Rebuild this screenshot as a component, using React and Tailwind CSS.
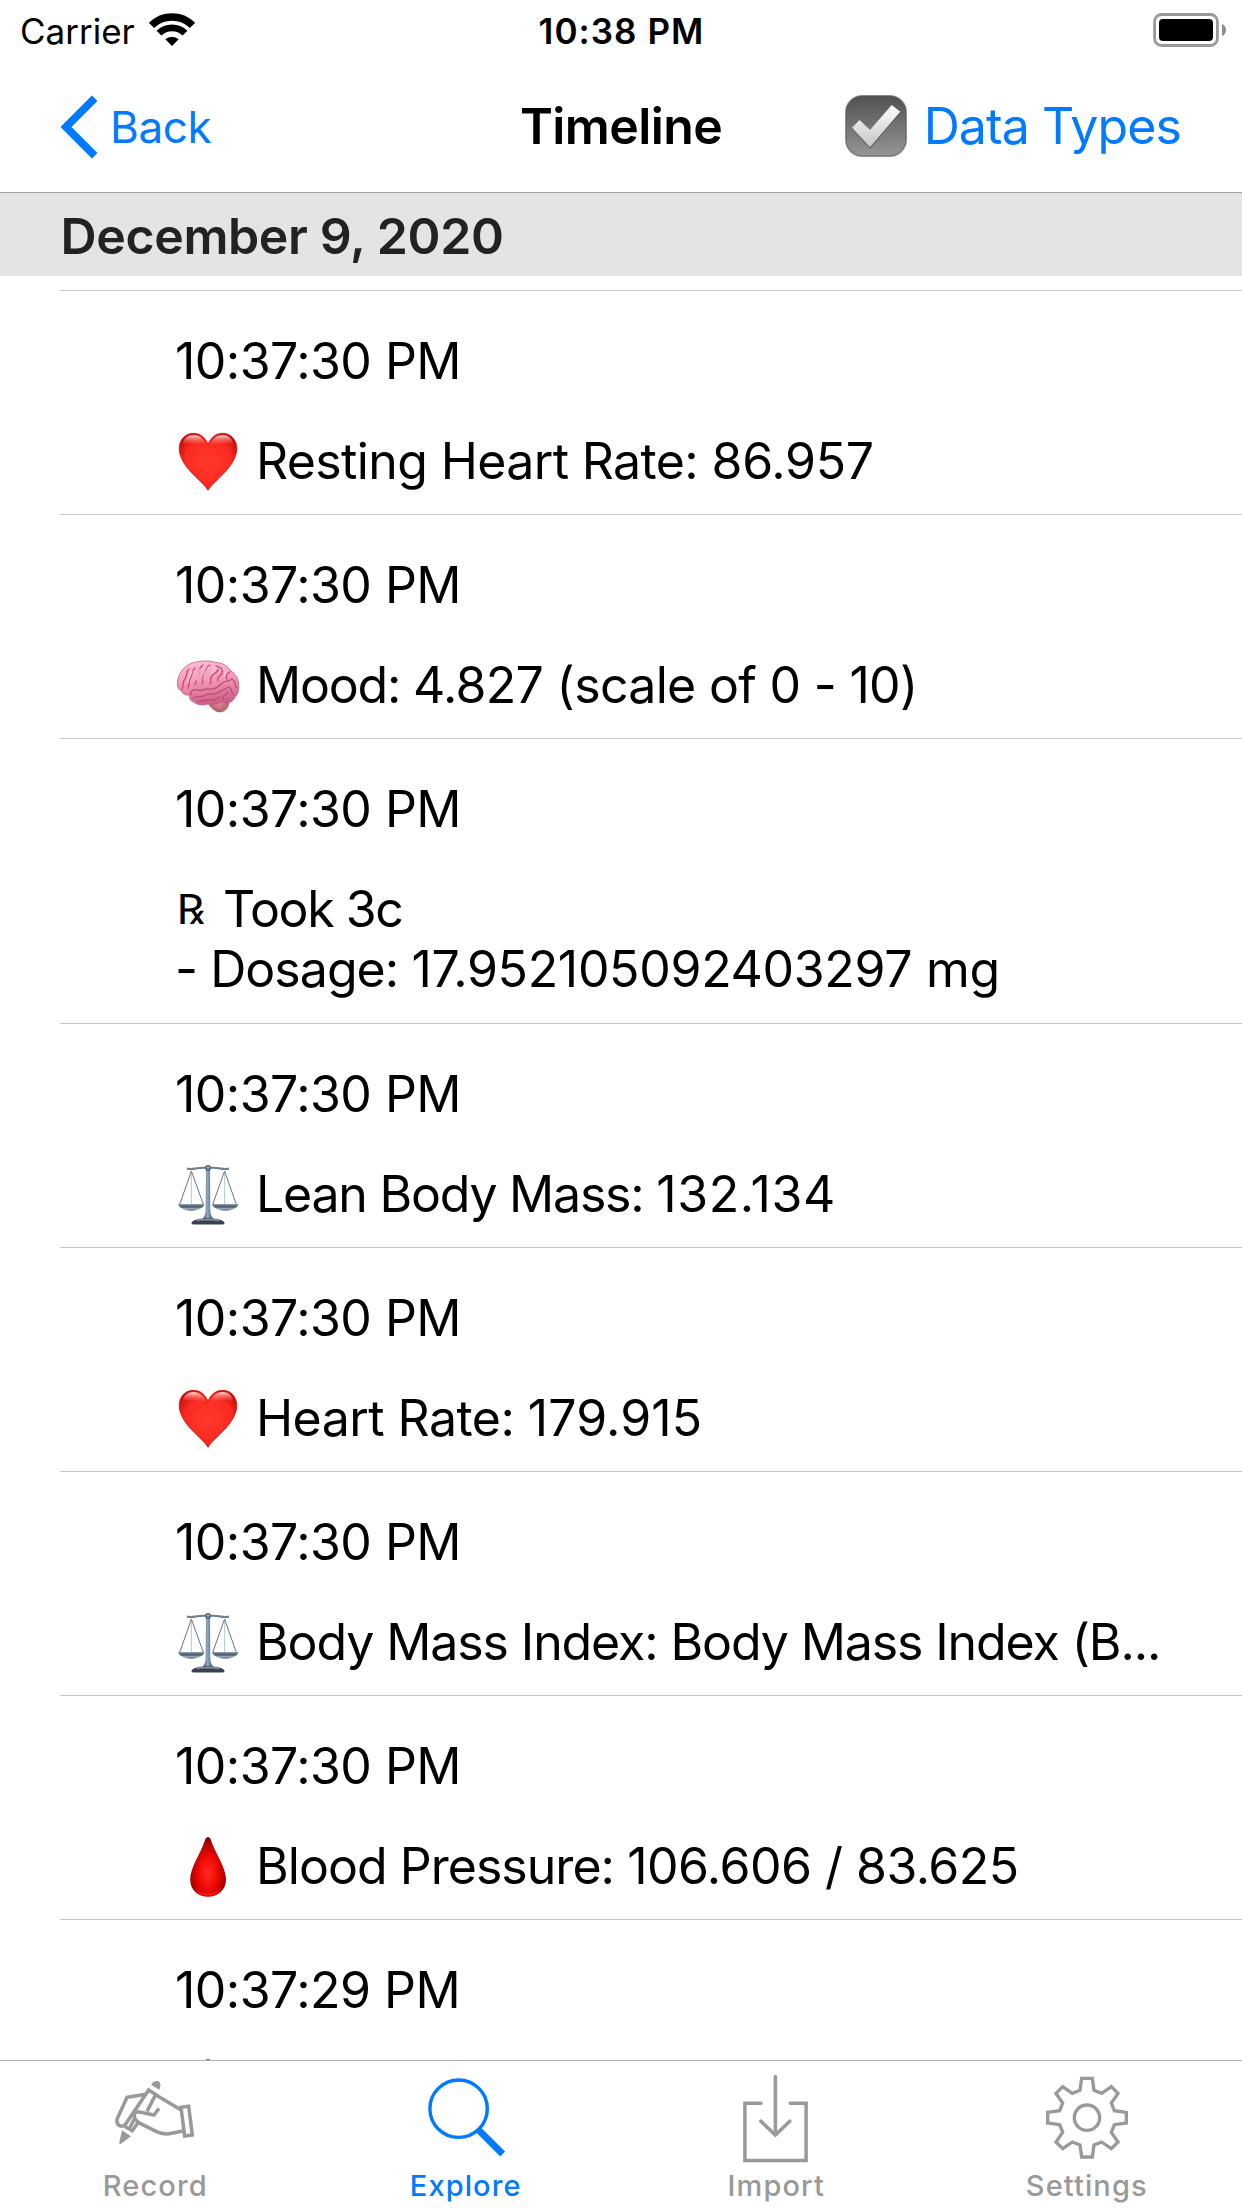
const HeartIcon = () => (
  <svg viewBox="0 0 64 64" className="block size-16 shrink-0">
    <defs>
      <radialGradient id="heartFill" cx="0.5" cy="0.5" r="0.58">
        <stop offset="0" stopColor="#ff3a2c" />
        <stop offset="0.7" stopColor="#fb2a20" />
        <stop offset="1" stopColor="#c80c08" />
      </radialGradient>
      <linearGradient id="heartShine" x1="0" y1="0" x2="0" y2="1">
        <stop offset="0" stopColor="#ffe3e0" stopOpacity="0.95" />
        <stop offset="1" stopColor="#ff6a60" stopOpacity="0" />
      </linearGradient>
    </defs>
    <path d="M32 60.3C27 51 3.4 37 3.2 18.5C3.2 9.500 9.500 3.300 17.500 3.300C24 3.300 29.500 7.500 32 14.500C34.500 7.500 40 3.300 46.500 3.300C54.500 3.300 60.800 9.500 60.800 18.500C60.600 37 37 51 32 60.300Z" fill="url(#heartFill)" stroke="#cf120d" strokeWidth="0.8" />
    <path d="M6.500 15C7.500 8 12 5 17.500 5C23.500 5 28 9 30 15C24 13 12 11.500 6.500 15Z" fill="url(#heartShine)" />
    <path d="M57.500 15C56.500 8 52 5 46.500 5C40.500 5 36 9 34 15C40 13 52 11.500 57.500 15Z" fill="url(#heartShine)" />
  </svg>
);

const BrainIcon = () => (
  <svg viewBox="0 0 64 64" className="block size-16 shrink-0" strokeLinecap="round" strokeLinejoin="round">
    <defs>
      <linearGradient id="brainFill" x1="0.4" y1="0" x2="0.6" y2="1">
        <stop offset="0" stopColor="#ffbdd1" />
        <stop offset="0.45" stopColor="#f596b5" />
        <stop offset="1" stopColor="#c95a82" />
      </linearGradient>
      <radialGradient id="brainStem" cx="0.55" cy="0.5" r="0.6">
        <stop offset="0" stopColor="#dd8a92" />
        <stop offset="1" stopColor="#a84f60" />
      </radialGradient>
    </defs>
    <path d="M31 48C35 55 40 58.500 44 58.300C50 58 53.500 53 53.500 46L40 42Z" fill="url(#brainStem)" />
    <path d="M1.500 31C1 22 6 14 13 10.500C21 6.500 33 6 40 8.500C46 8.500 52 12 55 17C60 20 63 26 62.800 32C63 37 61.500 41 59 43C57.500 47.500 52 50.500 47 47.500C43 50 36 50 33 49.500C28 52 21 51 18 48C14 47 13 44 14 41C9 42 6 39 6 37C3 36 1.600 34 1.500 31Z" fill="url(#brainFill)" stroke="#c45c80" strokeWidth="0.8" />
    <g fill="none" stroke="#b94c74" strokeWidth="1.250">
      <path d="M15 41C14 37 18 35 21 36C26 38 29 34 33 35C38 36 42 33 45 30C48 27 52 28 56 25" />
      <path d="M17 44C22 41 26 44 29 41C33 39 38 42 43 38C46 35 50 36 52 33" />
      <path d="M6 36C8 32 6 28 9 25C12 21 9 18 13 15" />
      <path d="M12 34C14 30 12 26 15 23C17 20 15 17 19 14" />
      <path d="M19 31C21 27 19 25 22 21C24 18 22 14 27 11" />
      <path d="M26 30C28 26 25 24 29 20C31 17 29 13 34 11" />
      <path d="M34 30C36 27 33 25 36 22C38 18 42 20 42 15" />
      <path d="M42 27C40 23 45 22 46 19C48 15 44 13 40 12" />
      <path d="M51 25C49 21 52 19 54 18M56 25C60 27 58 32 61 34M53 33C57 35 54 39 58 41M47 46C45 42 50 41 52 38" />
      <path d="M22 47C27 48 30 45 34 46C38 46 41 45 43 43" />
    </g>
    <g fill="none" stroke="#ffd7e3" strokeWidth="1.200" opacity="0.8">
      <path d="M16 17C15 21 12 24 12 28M24 15C23 20 20 23 20 26M32 14C31 18 28 21 28 25M38 13C40 15 37 18 36 19M47 15C51 17 49 20 48 23" />
    </g>
  </svg>
);

const ScalesIcon = () => (
  <svg viewBox="0 0 64 64" className="block size-16 shrink-0" fill="none">
    <defs>
      <linearGradient id="metal" x1="0" y1="0" x2="1" y2="0">
        <stop offset="0" stopColor="#4b586b" />
        <stop offset="0.45" stopColor="#8ba6c0" />
        <stop offset="1" stopColor="#4b5566" />
      </linearGradient>
      <linearGradient id="pan" x1="0" y1="0" x2="0" y2="1">
        <stop offset="0" stopColor="#8ba3bb" />
        <stop offset="0.45" stopColor="#4a4f57" />
        <stop offset="0.75" stopColor="#9cbbd8" />
        <stop offset="1" stopColor="#3c4552" />
      </linearGradient>
    </defs>
    <path d="M11 5.500C16 7.500 22 3.500 32 5C42 3.500 48 7.500 53 5.500" stroke="#6d7d90" strokeWidth="1.900" />
    <path d="M15.400 8V41M48.600 8V41" stroke="#b4c8de" strokeWidth="1" />
    <path d="M15.400 8L3.500 42M15.400 8L27.500 42M48.600 8L36.500 42M48.600 8L60.500 42" stroke="#70747b" strokeWidth="1" />
    <path d="M30 6H34L34.300 47C34.600 52 36 54 37.500 56H26.500C28 54 29.400 52 29.700 47Z" fill="url(#metal)" />
    <circle cx="32" cy="5" r="3" fill="#57677c" />
    <circle cx="32" cy="4.600" r="1.200" fill="#a9bdd3" />
    <path d="M2 41H28.500C27.500 45 22 47.500 15.300 47.500C8.500 47.500 3 45 2 41Z" fill="url(#pan)" />
    <path d="M36 41H62.500C61.500 45 56 47.500 49.300 47.500C42.500 47.500 37 45 36 41Z" fill="url(#pan)" />
    <path d="M15.500 60.500C15.500 57.500 22 55.300 32 55.300C42 55.300 48.500 57.500 48.500 60.500C48.500 61.200 47 61.500 45 61.500H19C17 61.500 15.500 61.200 15.500 60.500Z" fill="#38404c" />
    <path d="M21 57.600C26 56.300 38 56.300 43 57.600" stroke="#92a9c1" strokeWidth="1.400" />
  </svg>
);

const DropIcon = () => (
  <svg viewBox="0 0 64 64" className="block size-16 shrink-0">
    <defs>
      <radialGradient id="dropFill" gradientUnits="userSpaceOnUse" cx="32" cy="38" r="30" gradientTransform="translate(32 38) scale(0.68 1.2) translate(-32 -38)">
        <stop offset="0" stopColor="#ff2a20" />
        <stop offset="0.45" stopColor="#f00a06" />
        <stop offset="0.8" stopColor="#b50000" />
        <stop offset="1" stopColor="#7c0000" />
      </radialGradient>
    </defs>
    <path d="M32 2C33.500 2 34.500 3.500 35 5C39 18 50 32 50 44.500C50 55 42 61.800 32 61.800C22 61.800 14.200 55 14.200 44.500C14.200 32 25 18 29 5C29.500 3.500 30.500 2 32 2Z" fill="url(#dropFill)" />
    <path d="M19 54C22.500 59 27 60.500 32 60.500C37 60.500 41.500 59 45 54C41 57.500 36.500 58.500 32 58.500C27.500 58.500 23 57.500 19 54Z" fill="#ff1a10" />
  </svg>
);

const PrescriptionMark = () => (
  <span className="ml-px w-[47px] pt-px font-['Liberation_Serif',serif] text-[42px]">
    <span className="inline-block origin-left scale-x-110">℞</span>
  </span>
);

const WifiIcon = () => (
  <svg viewBox="0 0 46 34" className="ml-[14px] block h-[34px] w-[46px]" fill="none" stroke="#000">
    <path d="M2.500 12.500A29 29 0 0 1 43.500 12.500" strokeWidth="7.400" />
    <path d="M10 20.200A18.500 18.500 0 0 1 36 20.200" strokeWidth="6.800" />
    <path d="M23 33L16.300 26.300A10 10 0 0 1 29.700 26.300Z" fill="#000" stroke="none" />
  </svg>
);

const BatteryIcon = () => (
  <svg viewBox="0 0 74 34" className="block h-[34px] w-[74px]">
    <rect x="1.600" y="1.500" width="62.800" height="31" rx="7" fill="none" stroke="#999" strokeWidth="2.800" />
    <rect x="6" y="6" width="54" height="22" rx="4" fill="#000" />
    <path d="M69 11C71.500 12 73 14.300 73 17C73 19.700 71.500 22 69 23Z" fill="#8c8c8c" />
  </svg>
);

const CheckboxIcon = () => (
  <svg viewBox="0 0 62 62" className="block size-[62px]">
    <defs>
      <linearGradient id="box" x1="0" y1="0" x2="0" y2="1">
        <stop offset="0" stopColor="#515151" />
        <stop offset="1" stopColor="#969696" />
      </linearGradient>
      <linearGradient id="check" x1="0" y1="0" x2="0" y2="1">
        <stop offset="0" stopColor="#ffffff" />
        <stop offset="1" stopColor="#c4c4c4" />
      </linearGradient>
    </defs>
    <rect x="0.800" y="0.800" width="60.400" height="60.400" rx="16.500" fill="url(#box)" stroke="#555" strokeOpacity="0.6" strokeWidth="1.600" />
    <path d="M7 33.500L14.500 26L25 36L46.700 11L55.300 17.700L25 53.700Z" fill="#000" opacity="0.35" />
    <path d="M7 32.700L14.500 25L25 35L46.700 10L55.300 16.700L25 52.200Z" fill="url(#check)" />
  </svg>
);

const RecordIcon = () => (
  <svg viewBox="0 0 300 270" className="block h-[90px] w-[100px]" fill="none" stroke="currentColor" strokeWidth="10.500">
    <path d="M138 44C146 33 154 31 160 34C167 38 168 47 163 59Z" fill="currentColor" stroke="none" />
    <path d="M51 181L78 199L48 221Q42 224 43 217Z" fill="currentColor" stroke="none" />
    <path d="M122 73L66 82L36 148Q33 166 50 169Q57 169 62 162L131 60L152 74L126 124" />
    <path d="M152 74L227 119" />
    <path d="M162 115L147 135L100 125Q82 129 90 146Q95 155 105 160L155 185Q175 195 200 190L238 182" />
    <path d="M58 169L82 182L100 157M90 143L74 174" />
    <path d="M228 112L251 109L262 195L239 198Z" />
  </svg>
);

const ExploreIcon = () => (
  <svg viewBox="0 0 100 90" className="block h-[90px] w-[100px]" fill="none" stroke="currentColor">
    <circle cx="42.600" cy="38.700" r="28.700" strokeWidth="3.400" />
    <path d="M62.500 59.800L86.700 84" strokeWidth="6.800" />
  </svg>
);

const ImportIcon = () => (
  <svg viewBox="0 0 100 93" className="-mb-[3px] block h-[93px] w-[100px]" fill="none" stroke="currentColor" strokeWidth="3.500" strokeLinecap="round">
    <path d="M49.400 6.500V65M34.900 51.200L49.400 65L63.800 51.200" />
    <path d="M35 33.300H18.900V90.400H80.100V33.300H64.200" />
  </svg>
);

const SettingsIcon = () => (
  <svg viewBox="-150 -143 300 270" className="block h-[90px] w-[100px]" fill="none" stroke="currentColor" strokeWidth="10">
    <circle r="38" />
    <path d="M-16 -118H16L21 -82L44 -73L73 -93L93 -73L73 -44L82 -21L118 -16V16L82 21L73 44L93 73L73 93L44 73L21 82L16 118H-16L-21 82L-44 73L-73 93L-93 73L-73 44L-82 21L-118 16V-16L-82 -21L-73 -44L-93 -73L-73 -93L-44 -73L-21 -82Z" />
  </svg>
);

const TIME = "10:37:30 PM";

const entries = [
  { time: TIME, icon: <HeartIcon />, label: "Resting Heart Rate: ", labelTrack: "tracking-[-0.63px]", value: "86.957", valueTrack: "tracking-[-0.28px]" },
  { time: TIME, icon: <BrainIcon />, label: "Mood: ", labelTrack: "tracking-[-1.2px]", value: "4.827 (scale of 0 - 10)", valueTrack: "tracking-[-0.68px]" },
  { time: TIME, rx: true, label: "Took 3c", labelTrack: "tracking-[-1.4px]", extra: true },
  { time: TIME, icon: <ScalesIcon />, label: "Lean Body Mass: ", labelTrack: "tracking-[-1.22px]", value: "132.134", valueTrack: "tracking-[0.6px]" },
  { time: TIME, icon: <HeartIcon />, label: "Heart Rate: ", labelTrack: "tracking-[-0.55px]", value: "179.915", valueTrack: "tracking-[0.1px]" },
  { time: TIME, icon: <ScalesIcon />, label: "Body Mass Index: Body Mass Index (B...", labelTrack: "tracking-[-1.1px]" },
  { time: TIME, icon: <DropIcon />, label: "Blood Pressure: ", labelTrack: "tracking-[-0.96px]", value: "106.606 / 83.625", valueTrack: "tracking-[-0.52px]" },
  { time: "10:37:29 PM", icon: <div className="-mt-[2px]"><ScalesIcon /></div> },
];

function Entry({ time, icon, rx, label, labelTrack, value, valueTrack, extra }) {
  return (
    <li className="ml-[60px] border-t border-[#c6c6c8] pt-10 pb-[23px] pl-[115px]">
      <p className="leading-[60px] tracking-[-0.53px]">{time}</p>
      <div className="mt-[39px] flex h-[61px] items-start leading-[63px] whitespace-pre">
        {rx ? <PrescriptionMark /> : <span className="mr-4 ml-px">{icon}</span>}
        <span className={labelTrack}>{label}</span>
        <span className={valueTrack}>{value}</span>
      </div>
      {extra && (
        <p className="leading-[61px] whitespace-pre">
          <span className="tracking-[-0.95px]">- Dosage: </span>
          <span className="tracking-[-0.31px]">17.952105092403297 mg</span>
        </p>
      )}
    </li>
  );
}

const tabs = [
  { label: "Record", icon: <RecordIcon /> },
  { label: "Explore", icon: <ExploreIcon />, active: true },
  { label: "Import", icon: <ImportIcon /> },
  { label: "Settings", icon: <SettingsIcon /> },
];

export default function App() {
  return (
    <div className="flex h-[2208px] w-[1242px] flex-col overflow-hidden bg-white font-['Inter',sans-serif] text-[50px] text-black">
      <header className="shrink-0 border-b border-[#a0a0a0]">
        <div className="flex h-[62px] items-center pr-[15px] pl-[20px] text-[35px] leading-none">
          <div className="flex flex-1 items-center">
            <span>Carrier</span>
            <div className="-mt-[3px]"><WifiIcon /></div>
          </div>
          <span className="pr-[4px] font-semibold tracking-[1.06px]">10:38 PM</span>
          <div className="-mt-[3px] flex flex-1 justify-end"><BatteryIcon /></div>
        </div>
        <nav className="flex h-[130px] items-center pr-[61px] pl-[60px] pb-[2px] leading-[60px] whitespace-nowrap">
          <div className="flex flex-1 items-center text-[#007aff]">
            <svg viewBox="0 0 38 64" className="mt-px block h-16 w-[38px]" fill="none" stroke="currentColor" strokeWidth="7.800">
              <path d="M34.700 3.300L6 32L34.700 60.700" />
            </svg>
            <span className="mt-px ml-[12px] text-[44px] tracking-[-0.4px]">Back</span>
          </div>
          <h1 className="pl-px font-semibold tracking-[-0.6px]">Timeline</h1>
          <div className="flex flex-1 items-center justify-end text-[#007aff]">
            <CheckboxIcon />
            <span className="ml-[17px] tracking-[-0.9px]">Data Types</span>
          </div>
        </nav>
      </header>

      <main className="min-h-0 flex-1 overflow-hidden">
        <h2 className="h-[83px] bg-[#e4e4e4] pt-[13px] pl-[60.500px] leading-[60px] font-semibold tracking-[-0.37px] text-[#222]">
          December 9, 2020
        </h2>
        <ul className="pt-[14px]">
          {entries.map((entry, i) => (
            <Entry key={i} {...entry} />
          ))}
        </ul>
      </main>

      <footer className="grid h-[148px] shrink-0 grid-cols-4 border-t border-[#b0b0b0] bg-white pt-[9px]">
        {tabs.map(({ label, icon, active }) => (
          <div key={label} className={active ? "flex flex-col items-center text-[#007aff]" : "flex flex-col items-center text-[#999]"}>
            {icon}
            <span className="mt-[8px] text-[29px] leading-[36px] font-medium tracking-[1.1px]">{label}</span>
          </div>
        ))}
      </footer>
    </div>
  );
}
